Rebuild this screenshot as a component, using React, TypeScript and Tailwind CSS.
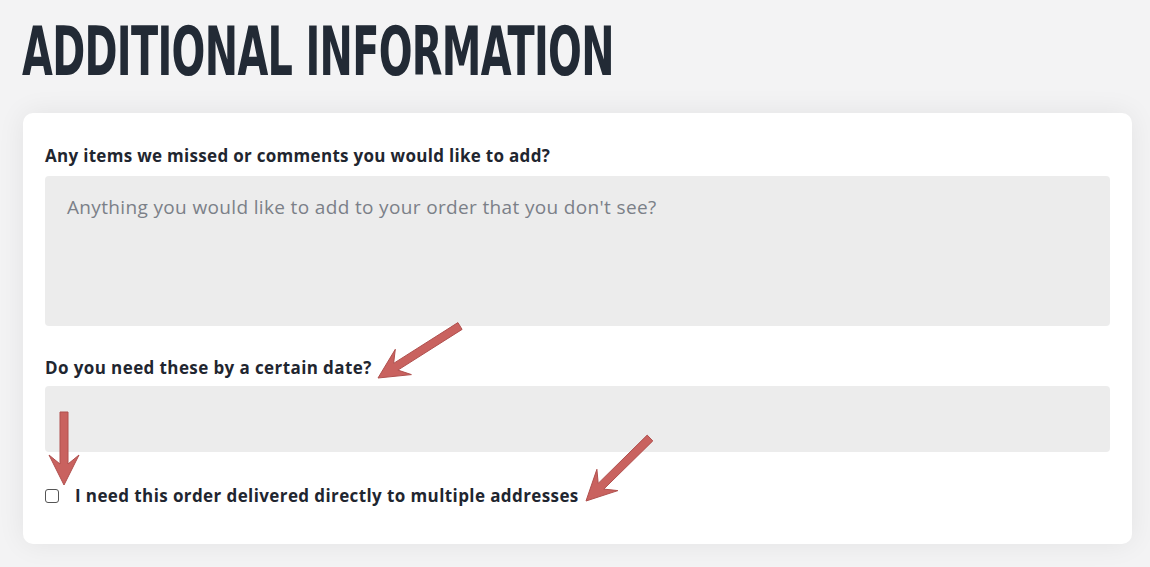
import React from 'react';

type Pt = [number, number];

// builds an arrow polygon from tail to tip
const arrowPoints = (tail: Pt, tip: Pt) => {
  const dx = tip[0] - tail[0];
  const dy = tip[1] - tail[1];
  const L = Math.hypot(dx, dy);
  const ux = dx / L;
  const uy = dy / L;
  const nx = -uy;
  const ny = ux;
  const local: Pt[] = [
    [0, -4],
    [L - 21, -4],
    [L - 30, -15],
    [L, 0],
    [L - 30, 15],
    [L - 21, 4],
    [0, 4],
  ];
  return local
    .map(([a, b]) => `${(tail[0] + ux * a + nx * b).toFixed(1)},${(tail[1] + uy * a + ny * b).toFixed(1)}`)
    .join(' ');
};

const arrows: { tail: Pt; tip: Pt }[] = [
  { tail: [460, 326], tip: [378, 378] },
  { tail: [64, 412], tip: [64, 485] },
  { tail: [650, 438], tip: [586, 501] },
];

const App = () => {
  return (
    <div className="relative min-h-[567px] w-full overflow-hidden bg-[#f3f3f4] font-['Open_Sans',sans-serif]">
      <div className="h-[113px] px-[22px] pt-[14px]">
        <h1 className="inline-block origin-left scale-x-[0.65] whitespace-nowrap font-['DejaVu_Sans_Condensed',sans-serif] text-[68px] font-bold leading-[76px] tracking-[-1px] text-[#222a35]">
          ADDITIONAL INFORMATION
        </h1>
      </div>

      <div className="mx-[23px] w-[1109px] rounded-[10px] bg-white px-[22px] pb-[38px] pt-[33px] shadow-[0_0_28px_rgba(0,0,0,0.07)]">
        <label className="block text-[17px] font-bold leading-[20px] tracking-[0.3px] text-[#1f2630]">
          Any items we missed or comments you would like to add?
        </label>
        <textarea
          className="mt-[10px] block h-[150px] w-full resize-none rounded-[4px] bg-[#ececec] px-[22px] py-[19px] text-[19px] leading-[24px] tracking-[0.35px] text-[#333] placeholder:text-[#7b8088] outline-none"
          placeholder="Anything you would like to add to your order that you don't see?"
        />

        <label className="mt-[32px] block text-[17px] font-bold leading-[20px] tracking-[0.4px] text-[#1f2630]">
          Do you need these by a certain date?
        </label>
        <input
          type="text"
          className="mt-[8px] block h-[66px] w-full rounded-[4px] bg-[#ececec] px-[22px] text-[18px] outline-none"
        />

        <div className="mt-[34px] flex items-center">
          <input
            type="checkbox"
            className="h-[14px] w-[14px] appearance-none rounded-[3px] border border-[#555] bg-white"
          />
          <span className="ml-[16px] text-[17px] font-bold leading-[20px] tracking-[0.4px] text-[#1f2630]">
            I need this order delivered directly to multiple addresses
          </span>
        </div>
      </div>

      <svg className="pointer-events-none absolute inset-0" width="1150" height="567">
        {arrows.map((a, i) => (
          <polygon
            key={i}
            points={arrowPoints(a.tail, a.tip)}
            fill="#c9625f"
            stroke="#b0504e"
            strokeWidth="1"
            strokeLinejoin="round"
          />
        ))}
      </svg>
    </div>
  );
};

export default App;
